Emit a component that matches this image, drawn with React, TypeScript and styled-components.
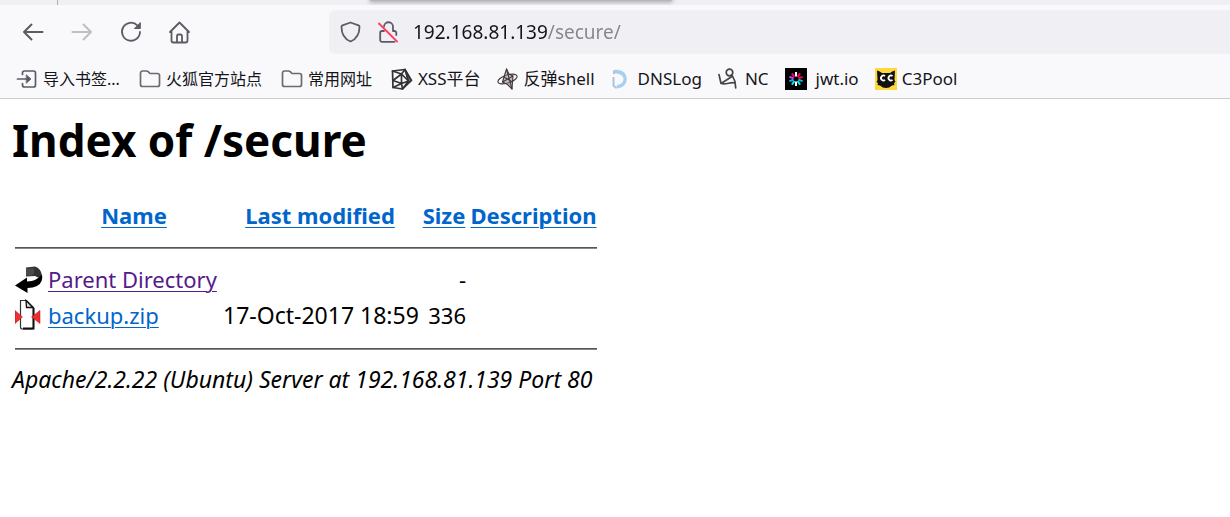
import React from "react";
import styled, { createGlobalStyle } from "styled-components";

const GlobalStyle = createGlobalStyle`
  *, *::before, *::after { box-sizing: border-box; }
  body {
    margin: 0;
    background: #fff;
    color: #000;
    font-family: "Noto Sans", "Noto Sans CJK SC", sans-serif;
  }
`;

const Chrome = styled.header`
  background: #f9f9fb;
  border-bottom: 1px solid #ccc;
`;

const TabStrip = styled.div`
  display: flex;
  height: 5px;
  background: #f0f0f4;
  overflow: hidden;
`;

const PinnedTab = styled.div`
  flex: none;
  width: 58px;
  border-right: 1px solid #aeaeb4;
`;

const ActiveTab = styled.div`
  flex: none;
  width: 302px;
  height: 1px;
  margin-left: 312px;
  border-radius: 0 0 4px 4px;
  background: #b5b5ba;
  box-shadow: 0 0 4px 1px rgba(0, 0, 0, 0.4);
`;

const Toolbar = styled.nav`
  display: flex;
  align-items: center;
  padding: 5px 0 5px 17px;
`;

const ToolButtons = styled.div`
  display: flex;
  flex: none;
  gap: 17px;
  width: 312px;
`;

const ToolButton = styled.button`
  display: grid;
  place-items: center;
  width: 32px;
  height: 32px;
  padding: 0;
  border: 0;
  background: none;
  color: #5b5b66;

  &:disabled { color: #bebec4; }
`;

const AddressBar = styled.form`
  display: flex;
  flex: 1;
  align-items: center;
  height: 44px;
  padding-left: 10px;
  gap: 13px;
  border-radius: 6px 0 0 6px;
  background: #f0f0f4;
`;

const IdentityButton = styled.button`
  display: grid;
  place-items: center;
  width: 24px;
  height: 24px;
  padding: 0;
  border: 0;
  background: none;
  color: #5b5b66;
`;

const AddressInput = styled.input`
  flex: 1;
  min-width: 0;
  height: 32px;
  padding: 0;
  border: 0;
  outline: 0;
  font: 19px/32px "Noto Sans", sans-serif;
  color: #15141a;
  background: linear-gradient(to right, #15141a 135px, #84848a 135px);
  background-clip: text;
  -webkit-text-fill-color: transparent;
`;

const BookmarkBar = styled.nav`
  display: flex;
  align-items: center;
  gap: 16px;
  height: 39px;
  padding: 0 16px;
`;

const Bookmark = styled.a<{ $compact?: boolean }>`
  display: flex;
  flex: none;
  align-items: center;
  gap: 5px;
  padding-right: ${(p) => (p.$compact ? 3 : 0)}px;
  font-size: ${(p) => (p.$compact ? 16 : 17)}px;
  line-height: 24px;
  color: #15141a;
  text-decoration: none;
  white-space: nowrap;
`;

const Page = styled.main`
  padding: 13px 12px;
`;

const Title = styled.h1`
  margin: 0 0 30px;
  font-size: 44px;
  line-height: 56px;
  font-weight: 700;
`;

const Listing = styled.table`
  border-collapse: collapse;
  table-layout: fixed;
  width: 587px;
  font-size: 22px;
  line-height: 36px;
`;

const Column = styled.col<{ $w: number }>`
  width: ${(p) => p.$w}px;
`;

const HeadCell = styled.th`
  padding: 0;
  font-weight: 700;
  text-align: center;
  line-height: 34px;
  white-space: nowrap;
`;

const Cell = styled.td<{ $align?: string }>`
  padding: 0 2px 0 0;
  text-align: ${(p) => p.$align || "left"};
  white-space: nowrap;
`;

const DateCell = styled(Cell)`
  padding: 0 3px;
  font-size: 23px;
`;

const IconCell = styled.td`
  padding: 0 0 0 3px;

  svg { display: block; }
`;

const RuleCell = styled.td`
  padding: 15px 2px 12px 3px;
`;

const Rule = styled.hr`
  margin: 0;
  height: 2px;
  border: 0;
  border-top: 1px solid #555;
  background: #888;
`;

const Link = styled.a<{ $visited?: boolean }>`
  color: ${(p) => (p.$visited ? "#551a8b" : "#0066cc")};
  text-decoration-thickness: 1px;
  text-underline-offset: 3px;
`;

const Signature = styled.address`
  font-size: 23px;
  line-height: 34px;
`;

const line = {
  fill: "none",
  stroke: "currentColor",
  strokeWidth: 2,
  strokeLinecap: "round" as const,
  strokeLinejoin: "round" as const,
};

const BackIcon = () => (
  <svg width="24" height="24" viewBox="0 0 24 24" {...line}>
    <path d="M21.5 12H3M10.5 4.5 3 12l7.500 7.500" />
  </svg>
);

const ForwardIcon = () => (
  <svg width="24" height="24" viewBox="0 0 24 24" {...line}>
    <path d="M2.500 12H21M13.500 4.500 21 12l-7.500 7.500" />
  </svg>
);

const ReloadIcon = () => (
  <svg width="24" height="24" viewBox="0 0 24 24" {...line} strokeWidth={1.8}>
    <path d="M18.500 5.500A9 9 0 1 0 21 12" />
    <path d="M21.300 3v5.500h-5.500z" fill="currentColor" strokeWidth={1} />
  </svg>
);

const HomeIcon = () => (
  <svg width="24" height="24" viewBox="0 0 24 24" {...line} strokeWidth={1.8}>
    <path d="M2 12 11.500 2.500 21 12M3.500 10.500V20.500a2 2 0 0 0 2 2h12a2 2 0 0 0 2-2V10.500" />
    <path d="M9 22v-6a1.500 1.500 0 0 1 1.500-1.500h2a1.500 1.500 0 0 1 1.500 1.500v6" />
  </svg>
);

const ShieldIcon = () => (
  <svg width="24" height="24" viewBox="0 0 24 24" {...line} strokeWidth={1.8}>
    <path d="M11.500 2.500 19.500 5.300q1 .4 1 1.400C20.500 13 17.500 19 11.500 21.500 5.500 19 2.500 13 2.500 6.700q0-1 1-1.400z" />
  </svg>
);

const InsecureIcon = () => (
  <svg width="24" height="24" viewBox="0 0 24 24" {...line} strokeWidth={1.800}>
    <path d="M8 6.500a4.500 4.500 0 0 1 9 .5v4M17 11h1.500a1.800 1.800 0 0 1 1.800 1.800V15M8 11H6a1.800 1.800 0 0 0-1.800 1.800v7.200A1.800 1.800 0 0 0 6 21.800h12.500" />
    <path d="M3 3.500 21 21.500" stroke="#ff3b64" strokeWidth={1.800} />
  </svg>
);

const ImportIcon = () => (
  <svg width="22" height="22" viewBox="0 0 22 22" {...line} color="#5b5b66" strokeWidth={1.700}>
    <path d="M6.500 6.500V5a2 2 0 0 1 2-2h9a2 2 0 0 1 2 2v12a2 2 0 0 1-2 2h-9a2 2 0 0 1-2-2v-1.500M1.500 11h9" />
    <path d="m10.500 7 4.500 4-4.500 4z" fill="currentColor" strokeWidth={0.8} />
  </svg>
);

const FolderIcon = () => (
  <svg width="22" height="22" viewBox="0 0 22 22" {...line} color="#6a6a74" strokeWidth={1.700}>
    <path d="M1.500 16.500V5a2 2 0 0 1 2-2h4q1 0 1.700.7L11 5.500h7.500a2 2 0 0 1 2 2v9a2 2 0 0 1-2 2h-15a2 2 0 0 1-2-2z" />
  </svg>
);

const XssIcon = () => (
  <svg width="22" height="22" viewBox="0 0 22 22" {...line} color="#333" strokeWidth={1.700}>
    <path d="M1.500 3 14 1.500 20.500 12.500 11.500 21 2 19.500z" />
    <path d="M1.500 3 10.500 6 14 1.500M10.500 6 2 12.500 10.500 15.500V6l7 7-7 2.500L2 19.500M10.500 15.500l1 5.500M14 1.500l3.500 11.500-6 8" />
    <path d="m14 2 6 10.500-5.500 5.500 2.500-5.500z" fill="currentColor" fillOpacity={0.6} strokeWidth={1} />
  </svg>
);

const ShellIcon = () => (
  <svg width="22" height="22" viewBox="0 0 22 22" {...line} color="#41383a" strokeWidth={1.100}>
    <ellipse cx="10.500" cy="11" rx="10" ry="4" transform="rotate(-18 10.500 11)" />
    <path d="M9.500 1 7 9l-1.500 5 5 2.500L15 21l.5-7 .5-6-4-2z" fill="#8b7f80" fillOpacity={0.5} />
    <path d="M9.500 1 15 21M7 9l8.500 5M16 8l-10.500 6" />
  </svg>
);

const DnsIcon = () => (
  <svg width="22" height="22" viewBox="0 0 22 22">
    <path d="M3 2C9 .5 16 4 15.700 11 15.500 17 11 20.500 5 20.500l1-3.500c4-.5 6.500-2.500 6.500-6 0-3.500-3.500-5.500-9.500-5.500z" fill="#a5cfec" />
    <path d="M3 2.500V6M2.500 9v8.500L5 20" fill="none" stroke="#a9c6dc" strokeWidth="2" />
  </svg>
);

const NcIcon = () => (
  <svg width="22" height="22" viewBox="0 0 22 22" {...line} color="#45454a" strokeWidth={1.700}>
    <circle cx="11.500" cy="4.500" r="3.300" />
    <path d="M1 6.500 3 15.500 14 8.500M14 7l3 6.500.700 6.500M3.500 15.500c4 1.500 10-2 13.500-.5" />
  </svg>
);

const JwtIcon = () => (
  <svg width="26" height="22" viewBox="0 0 26 22">
    <path fill="#000" d="M0 0h22v22H0z" />
    {["#fff", "#fb015b", "#fb015b", "#00b9f1", "#00f2e6", "#fff", "#00f2e6", "#00b9f1", "#d63aff", "#fb015b"].map((color, i) => (
      <path key={i} d="M11 8.500V4" stroke={color} strokeWidth="2" transform={`rotate(${i * 36} 11 11)`} />
    ))}
  </svg>
);

const PoolIcon = () => (
  <svg width="22" height="22" viewBox="0 0 22 22">
    <path fill="#ffd83d" d="M0 0h22v22H0z" />
    <path d="M2 2.500q3 .5 5 2.500h8q2-2 5-2.500l-.500 9.500 1 2-1.500 1 .5 2-2.500.5q-2.500 2.500-6 2.500t-6-2.500L2.500 17l.5-2-1.500-1 1-2z" fill="#111" />
    <path d="M10 8a2.500 2.500 0 1 0 0 4M17.500 8a2.500 2.500 0 1 0 0 4" fill="none" stroke="#fff" strokeWidth="1.800" />
  </svg>
);

const ParentIcon = () => (
  <svg width="30" height="33" viewBox="0 0 30 33">
    <path d="M11 4.500 20 3.500q6 2 7 9l-2 3-5-2.500-9 .5z" fill="#333" />
    <path d="M12 5.500v7M14 5.500v7M16 5.500v7M18 5.500v6" stroke="#888" strokeWidth=".6" />
    <path d="M27 11.500q1.500 8-5 11.500-4 2-9.500 2V30L0 22.500 12 14.500v4Q22 18 27 11.500z" fill="#000" />
  </svg>
);

const ZipIcon = () => (
  <svg width="30" height="33" viewBox="0 0 30 33">
    <path d="M5.500 1.500h6l7 7V28q0 2-2 2h-9q-2 0-2-2z" fill="#fff" stroke="#333" strokeWidth="1.200" />
    <path d="M11 1.500 11.500 8.500H18z" fill="#ddd" stroke="#111" strokeWidth="1.300" />
    <path d="M18.500 9v20.500H8" fill="none" stroke="#111" strokeWidth="2" />
    <path d="M0 11.500 7.500 18 0 24.500zM25 11.500 16.500 18l8.500 6.500z" fill="#f03030" stroke="#a11" strokeWidth=".5" />
  </svg>
);

const bookmarks = [
  { label: "导入书签...", Icon: ImportIcon, compact: true },
  { label: "火狐官方站点", Icon: FolderIcon, compact: true },
  { label: "常用网址", Icon: FolderIcon, compact: true },
  { label: "XSS平台", Icon: XssIcon },
  { label: "反弹shell", Icon: ShellIcon },
  { label: "DNSLog", Icon: DnsIcon },
  { label: "NC", Icon: NcIcon },
  { label: "jwt.io", Icon: JwtIcon },
  { label: "C3Pool", Icon: PoolIcon },
];

const RuleRow = () => (
  <tr>
    <RuleCell colSpan={5}>
      <Rule />
    </RuleCell>
  </tr>
);

export default function App() {
  return (
    <>
      <GlobalStyle />
      <Chrome>
        <TabStrip>
          <PinnedTab />
          <ActiveTab />
        </TabStrip>
        <Toolbar>
          <ToolButtons>
            <ToolButton aria-label="Back"><BackIcon /></ToolButton>
            <ToolButton aria-label="Forward" disabled><ForwardIcon /></ToolButton>
            <ToolButton aria-label="Reload"><ReloadIcon /></ToolButton>
            <ToolButton aria-label="Home"><HomeIcon /></ToolButton>
          </ToolButtons>
          <AddressBar onSubmit={(e) => e.preventDefault()}>
            <IdentityButton type="button" aria-label="Tracking protection"><ShieldIcon /></IdentityButton>
            <IdentityButton type="button" aria-label="Connection not secure"><InsecureIcon /></IdentityButton>
            <AddressInput aria-label="Address" defaultValue="192.168.81.139/secure/" spellCheck={false} />
          </AddressBar>
        </Toolbar>
        <BookmarkBar>
          {bookmarks.map(({ label, Icon, compact }) => (
            <Bookmark key={label} href="#" $compact={compact}>
              <Icon />
              {label}
            </Bookmark>
          ))}
        </BookmarkBar>
      </Chrome>
      <Page>
        <Title>Index of /secure</Title>
        <Listing>
          <colgroup>
            <Column $w={36} />
            <Column $w={172} />
            <Column $w={200} />
            <Column $w={48} />
            <Column $w={131} />
          </colgroup>
          <thead>
            <tr>
              <td />
              <HeadCell><Link href="#">Name</Link></HeadCell>
              <HeadCell><Link href="#">Last modified</Link></HeadCell>
              <HeadCell><Link href="#">Size</Link></HeadCell>
              <HeadCell><Link href="#">Description</Link></HeadCell>
            </tr>
          </thead>
          <tbody>
            <RuleRow />
            <tr>
              <IconCell><ParentIcon /></IconCell>
              <Cell><Link href="#" $visited>Parent Directory</Link></Cell>
              <DateCell />
              <Cell $align="right">-</Cell>
              <Cell />
            </tr>
            <tr>
              <IconCell><ZipIcon /></IconCell>
              <Cell><Link href="#">backup.zip</Link></Cell>
              <DateCell>17-Oct-2017 18:59</DateCell>
              <Cell $align="right">336</Cell>
              <Cell />
            </tr>
            <RuleRow />
          </tbody>
        </Listing>
        <Signature>Apache/2.2.22 (Ubuntu) Server at 192.168.81.139 Port 80</Signature>
      </Page>
    </>
  );
}
